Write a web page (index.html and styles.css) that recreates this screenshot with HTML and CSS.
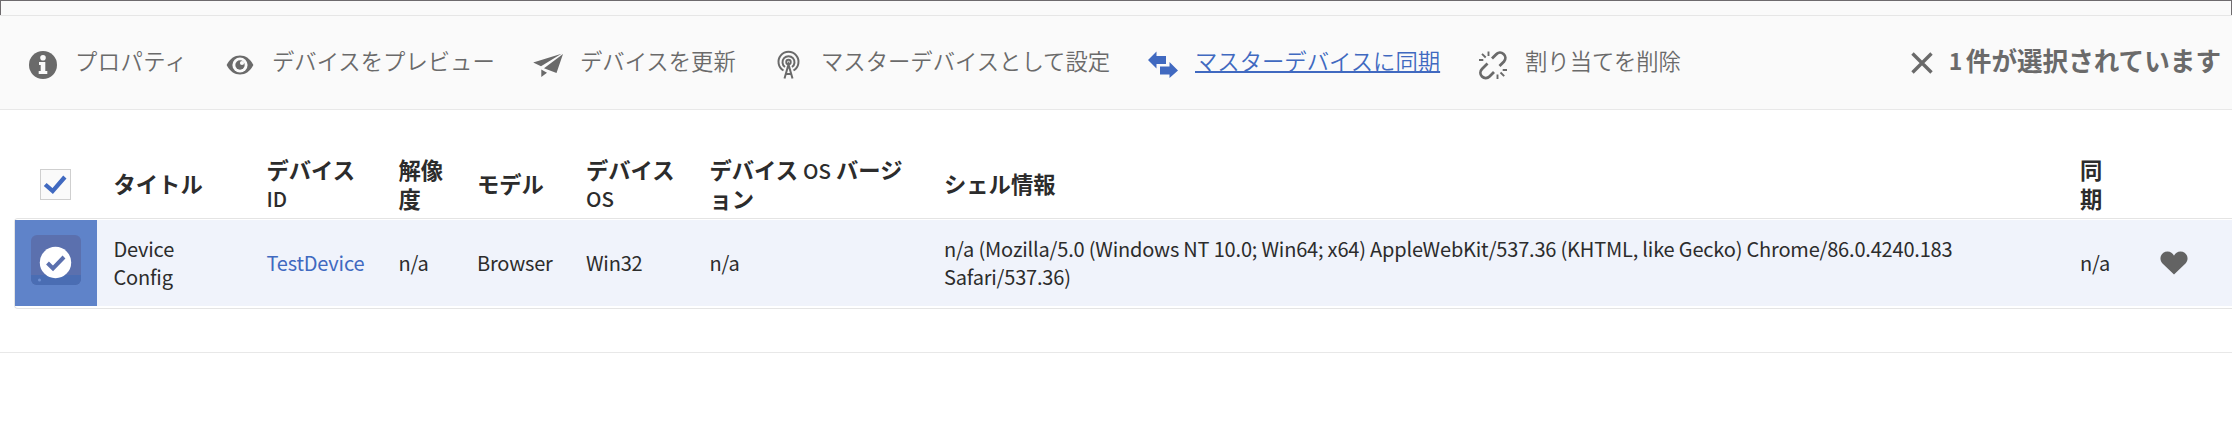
FILE: index.html
```html
<!DOCTYPE html>
<html lang="ja">
<head>
<meta charset="utf-8">
<title>デバイス</title>
<link rel="stylesheet" href="styles.css">
</head>
<body>
<div class="topstrip"></div>
<header class="toolbar">
  <nav class="actions">
    <a class="action props"><svg class="icon" viewBox="0 0 32 32"><circle cx="16" cy="16" r="14" fill="#6a6a6a"/><circle cx="16" cy="8.7" r="2.8" fill="#fafafa"/><path d="M12 13h6.3v9h2v3h-8.600v-3h2v-6H12z" fill="#fafafa"/></svg><span>プロパティ</span></a>
    <a class="action preview"><svg class="icon" viewBox="0 0 32 32"><path d="M2.600 16C6 9.500 10.500 6.500 16 6.500S26 9.500 29.400 16C26 22.500 21.500 25.500 16 25.500S6 22.500 2.600 16z" fill="#6a6a6a"/><circle cx="16" cy="16" r="7.600" fill="#fafafa"/><circle cx="16" cy="16" r="4.700" fill="#6a6a6a"/><circle cx="18" cy="14" r="2.100" fill="#fafafa"/></svg><span>デバイスをプレビュー</span></a>
    <a class="action refresh"><svg class="icon" viewBox="0 0 32 32"><path d="M1.200 13.500L29.500 4.800L9 17.300zM31 5L24.500 24L12 19.300zM9.300 20.500L15 23.800L9.300 28z" fill="#6a6a6a"/></svg><span>デバイスを更新</span></a>
    <a class="action master"><svg class="icon" viewBox="0 0 32 32" fill="none" stroke="#6a6a6a" stroke-width="2"><path d="M10.500 21.500A10 10 0 1 1 20.500 21.500M12 18A6 6 0 1 1 19 18M11.500 29.500L15.500 15.500L19.500 29.500M13 25h5"/><circle cx="15.500" cy="13" r="2.200"/></svg><span>マスターデバイスとして設定</span></a>
    <a class="action sync"><svg class="icon" viewBox="0 0 32 32"><path d="M1 11L9.500 2.500V7H19v8H9.500v4.500zM31 21.500L22.500 13v4.500H13v8h9.500V29z" fill="#4069c0"/></svg><span>マスターデバイスに同期</span></a>
    <a class="action unlink"><svg class="icon" viewBox="0 0 32 32" fill="none" stroke="#6a6a6a" stroke-width="2.800"><path d="M15 9.500L19 5.500A5 5 0 0 1 27 12.500L22.500 17M10.500 14.500L5 20A5 5 0 0 0 12.500 27.500L17 23"/><path stroke-width="1.900" d="M11.500 2.500v4.500M5 4.800l3.700 3.700M2 11h4.300M20.500 25.500v4.500M23.500 23.500l3.700 3.700M25.700 21h4.300"/></svg><span>割り当てを削除</span></a>
  </nav>
  <div class="selection"><svg class="close" viewBox="0 0 24 24"><path d="M2.500 2.500L21.500 21.500M21.500 2.500L2.500 21.500" stroke="#6a6a6a" stroke-width="3.400"/></svg><span class="count">1</span><span class="label">件が選択されています</span></div>
</header>
<main class="content">
  <div class="row head">
    <div class="select"><span class="checkbox"><svg viewBox="0 0 31 31"><path d="M4.500 15.500L12.500 22.500L25.500 7.500" fill="none" stroke="#4069c0" stroke-width="4.600"/></svg></span></div>
    <div>タイトル</div>
    <div>デバイス<br><span class="latin">ID</span></div>
    <div>解像<br>度</div>
    <div>モデル</div>
    <div>デバイス<br><span class="latin">OS</span></div>
    <div>デバイス <span class="latin">OS</span> バージ<br>ョン</div>
    <div>シェル情報</div>
    <div>同<br>期</div>
    <div></div>
  </div>
  <div class="frame">
    <div class="row item">
      <div class="select on"><span class="thumb"><svg viewBox="0 0 50 50"><path d="M0 40h50v4a6 6 0 0 1-6 6H6a6 6 0 0 1-6-6z" fill="#4a6db3"/><circle cx="8.500" cy="45" r="1.500" fill="#6f90d2"/><circle cx="24.500" cy="27.500" r="15.700" fill="#fff"/><path d="M16.500 28L22 33.500L33 22" fill="none" stroke="#5b70ae" stroke-width="4"/></svg></span></div>
      <div>Device<br>Config</div>
      <div class="link">TestDevice</div>
      <div>n/a</div>
      <div>Browser</div>
      <div>Win32</div>
      <div>n/a</div>
      <div>n/a (Mozilla/5.0 (Windows NT 10.0; Win64; x64) AppleWebKit/537.36 (KHTML, like Gecko) Chrome/86.0.4240.183<br>Safari/537.36)</div>
      <div>n/a</div>
      <div><svg class="heart" viewBox="0 0 28 24"><path d="M14 23.500L2.500 12.500C-2 7.500 1.500.5 7.500.5c3 0 5.300 1.700 6.500 4.300C15.200 2.200 17.500.5 20.500.5c6 0 9.500 7 5 12z" fill="#636363"/></svg></div>
    </div>
  </div>
</main>
</body>
</html>
```
FILE: styles.css
```css
* { box-sizing: border-box; }
body {
  margin: 0;
  height: 432px;
  overflow: hidden;
  background: #fff;
  color: #2c2c2c;
  font-family: "Noto Sans CJK JP", "Noto Sans", sans-serif;
  font-size: 20px;
  line-height: 28.5px;
  white-space: nowrap;
}
.topstrip {
  height: 15px;
  background: #fafafa;
  border: 1px solid #6e6b6e;
  border-bottom: 0;
}
.toolbar {
  display: flex;
  justify-content: space-between;
  height: 95px;
  padding-top: 1px;
  background: #fafafa;
  border-top: 1px solid #e6e6e6;
  border-bottom: 1px solid #e8e8e8;
  color: #6a6a6a;
}
.actions { display: flex; padding-left: 27px; }
.action {
  display: flex;
  align-items: center;
  gap: 16px;
  height: 92px;
  font-size: 22.35px;
  font-weight: 350;
}
.action span { margin-top: -5px; }
.icon { width: 32px; height: 32px; margin-top: 3px; flex: none; }
.props { width: 197px; }
.props span { letter-spacing: 0.4px; }
.preview { width: 308px; }
.refresh { width: 241px; }
.master { width: 374px; }
.sync { width: 330px; color: #4069c0; }
.sync span { text-decoration: underline; text-underline-offset: 1px; text-decoration-thickness: 1.5px; }
.selection {
  display: flex;
  align-items: center;
  height: 92px;
  padding-right: 11px;
  font-size: 25.6px;
  font-weight: 700;
}
.selection span { margin-top: -5px; }
.close { width: 24px; height: 24px; margin-right: 15px; }
.count { width: 17px; font-size: 23px; }
.content { height: 243px; padding-top: 44px; border-bottom: 1px solid #e8e8e8; }
.row {
  display: grid;
  grid-template-columns: 98.5px 153px 132px 78.5px 109px 123.5px 234.5px 1136px 79.5px 1fr;
  align-items: center;
}
.head {
  height: 59px;
  margin-left: 15px;
  margin-bottom: 5px;
  font-size: 22.3px;
  font-weight: 700;
}
.latin { font-size: 20.5px; font-weight: 500; }
.select { display: flex; align-items: center; justify-content: center; width: 82px; }
.checkbox { width: 31px; height: 31px; margin: 2px 1px 0 0; background: #fafafa; border: 1px solid #cfcfcf; }
.checkbox svg { display: block; }
.frame {
  height: 91px;
  margin-left: 14px;
  padding: 1px 0 2px;
  border: 1px solid #e4e4e4;
  border-right: 0;
  border-radius: 4px 0 0 4px;
}
.item { height: 86px; background: #f0f3fb; letter-spacing: -0.19px; }
.on { height: 86px; background: #5f83c9; }
.thumb { width: 50px; height: 50px; margin-top: -7px; border-radius: 6px; background: #5b70ae; }
.thumb svg { display: block; }
.link { color: #4069c0; }
.heart { display: block; width: 28px; height: 24px; }
```
